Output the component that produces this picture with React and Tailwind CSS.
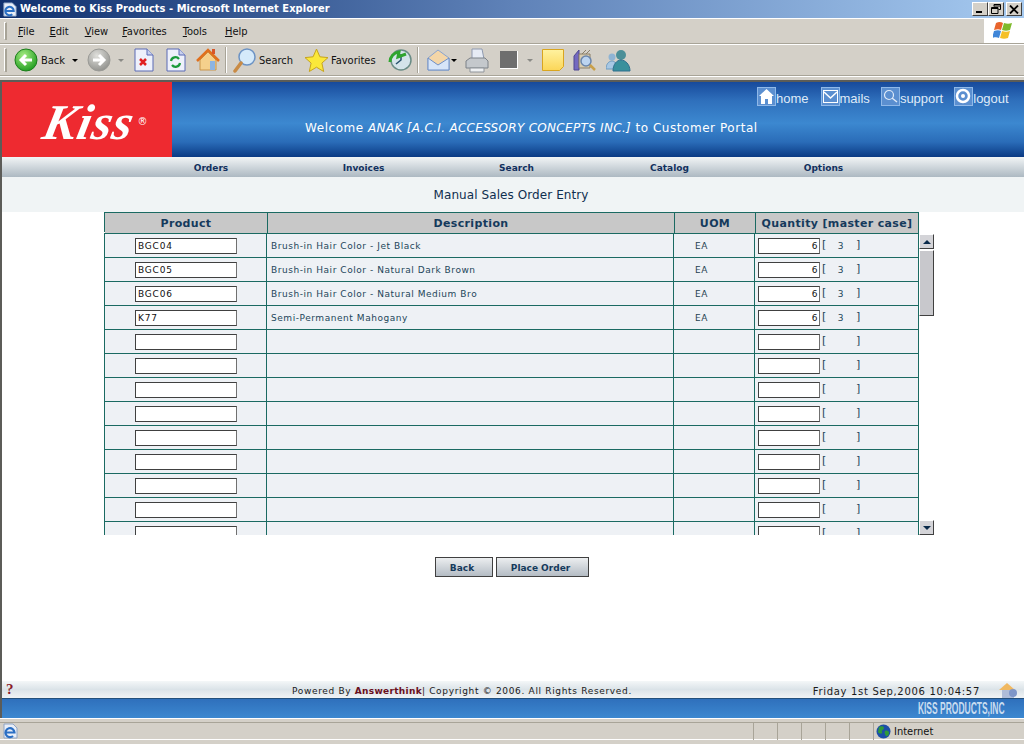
const rows = [
  ["BGC04", "Brush-in Hair Color - Jet Black", "EA", "6", "3"],
  ["BGC05", "Brush-in Hair Color - Natural Dark Brown", "EA", "6", "3"],
  ["BGC06", "Brush-in Hair Color - Natural Medium Bro", "EA", "6", "3"],
  ["K77", "Semi-Permanent Mahogany", "EA", "6", "3"],
  ...Array.from({ length: 9 }, () => ["", "", "", "", ""]),
];

const Arrow = ({ cls = "border-t-black" }) => (
  <span className={`block w-0 h-0 border-x-[3px] border-x-transparent border-t-[3px] ${cls}`} />
);

const RoundBtn = ({ grey, flip }) => (
  <svg width="24" height="24" viewBox="0 0 24 24">
    <defs>
      <radialGradient id={grey ? "gg" : "gb"} cx="40%" cy="30%" r="75%">
        <stop offset="0" stopColor={grey ? "#e0e0dc" : "#a6ec82"} />
        <stop offset="1" stopColor={grey ? "#8f8f8b" : "#1c9a1c"} />
      </radialGradient>
    </defs>
    <circle cx="12" cy="12" r="11" fill={`url(#${grey ? "gg" : "gb"})`} stroke={grey ? "#9a9a96" : "#1b7d1b"} />
    <path d={flip ? "M6 12h10M12 7l5 5-5 5" : "M18 12H8M12 7l-5 5 5 5"} stroke="#fff" strokeWidth="3" fill="none" />
  </svg>
);

const Doc = ({ children }) => (
  <svg width="20" height="24" viewBox="0 0 20 24">
    <path d="M1 1h12l6 6v16H1z" fill="#eef1fb" stroke="#5b6bb5" />
    <path d="M13 1v6h6" fill="#c8d0ee" stroke="#5b6bb5" />
    {children}
  </svg>
);

const Home = () => (
  <svg width="24" height="24" viewBox="0 0 24 24">
    <path d="M4 12v10h16V12L12 4z" fill="#f5d08c" stroke="#c8944a" />
    <path d="M1 13L12 2l11 11" fill="none" stroke="#e0701e" strokeWidth="2.5" />
    <rect x="14" y="13" width="5" height="9" fill="#8db4e2" />
    <rect x="16" y="1" width="3" height="5" fill="#d8562a" />
  </svg>
);

const Search = () => (
  <svg width="25" height="25" viewBox="0 0 25 25">
    <circle cx="15" cy="9" r="8" fill="#d5eafa" stroke="#6c93c4" strokeWidth="1.5" />
    <path d="M3 23l6-8" stroke="#c98b45" strokeWidth="3.5" strokeLinecap="round" />
  </svg>
);

const Star = () => (
  <svg width="25" height="25" viewBox="0 0 25 25">
    <path d="M12.5 1l3.4 7.8 8.1.8-6.1 5.5 1.8 8.4-7.2-4.3-7.2 4.3 1.8-8.4L1 9.6l8.1-.8z" fill="#fbe83a" stroke="#c7a51e" />
  </svg>
);

const History = () => (
  <svg width="24" height="24" viewBox="0 0 24 24">
    <circle cx="13" cy="12" r="10" fill="#d4e4ea" stroke="#6a8c86" strokeWidth="1.5" />
    <path d="M13 6v6l-5 4" stroke="#26506c" strokeWidth="1.5" fill="none" />
    <path d="M2 14a10 10 0 0 1 9-10l-1 5 8-3" stroke="#2fa52f" strokeWidth="3" fill="none" />
  </svg>
);

const Mail = () => (
  <svg width="23" height="24" viewBox="0 0 23 24">
    <path d="M1 10l10-8 11 8v12H1z" fill="#f4d6a8" stroke="#8aa4cf" />
    <path d="M1 22V10l10 7 11-7v12z" fill="#d7e5f8" stroke="#6f8fc6" />
  </svg>
);

const Printer = () => (
  <svg width="25" height="25" viewBox="0 0 25 25">
    <path d="M8 1h10l2 10H8z" fill="#e6ebf4" stroke="#8f9ab0" />
    <path d="M2 13l4-3h15l3 3v7H2z" fill="#c4c8cc" stroke="#7d8288" />
    <path d="M6 20h14v4H6z" fill="#eef0f2" stroke="#8f949a" />
  </svg>
);

const Note = () => (
  <svg width="22" height="22" viewBox="0 0 22 22">
    <defs>
      <linearGradient id="nt" x1="0" y1="0" x2="0" y2="1">
        <stop offset="0" stopColor="#fff2a0" />
        <stop offset="1" stopColor="#fbd658" />
      </linearGradient>
    </defs>
    <path d="M.5.5h21v17l-4 4H.5z" fill="url(#nt)" stroke="#d9a520" />
  </svg>
);

const Research = () => (
  <svg width="23" height="23" viewBox="0 0 23 23">
    <path d="M1 7l5-6v20H1z" fill="#7368c0" stroke="#4e4790" />
    <path d="M6 5h11v14H6z" fill="#d8ccb0" stroke="#8a7f68" />
    <path d="M9 5l4-4M13 5l4-4" stroke="#8a7f68" />
    <circle cx="13" cy="12" r="5" fill="#bcd4f0" stroke="#6b86ac" strokeWidth="1.5" />
    <path d="M17 16l5 5" stroke="#c9a04a" strokeWidth="2.5" />
  </svg>
);

const Messenger = () => (
  <svg width="25" height="23" viewBox="0 0 25 23">
    <circle cx="6" cy="8" r="3.5" fill="#8fb4d4" />
    <path d="M0 20c0-5 3-8 6-8s5 3 5 8z" fill="#a8c8e4" stroke="#6f9cc0" />
    <circle cx="15" cy="6" r="5" fill="#4b8f98" />
    <path d="M7 22c0-7 4-11 8-11s9 4 9 11z" fill="#39909c" stroke="#2f6f8e" />
  </svg>
);

const WinFlag = () => (
  <svg width="22" height="20" viewBox="0 0 22 20">
    <path d="M3 2c3-1.500 5-1 7 0l-2 7c-2-1-4-1-7 0z" fill="#e8642c" />
    <path d="M11 2c3 1 5 1 8 0l-2 7c-3 1-5 1-8 0z" fill="#7fba2c" />
    <path d="M1 10c3-1 5-1 7 0l-2 7c-2-1-4-1-7 0z" fill="#3f86d8" />
    <path d="M9 10c3 1 5 1 8 0l-2 7c-3 1-5 1-8 0z" fill="#f5c027" />
  </svg>
);

const Ie = ({ size = 16 }) => (
  <svg width={size} height={size} viewBox="0 0 16 16">
    <path d="M2 1h9l4 4v10H2z" fill="#e8eef8" stroke="#8ea4c4" />
    <path d="M3.500 9.500h9a4.500 4.500 0 1 0-1.500 3.500" fill="none" stroke="#2a6fc4" strokeWidth="2.200" />
  </svg>
);

const Globe = () => (
  <svg width="15" height="15" viewBox="0 0 15 15">
    <circle cx="7.500" cy="7.500" r="7" fill="#1c4fa8" />
    <path d="M3 3c2-1 5-1 5 1s-3 2-2 4-3 2-4 0zM9 7c2-1 4 0 4 2s-2 4-3 3-2-4-1-5z" fill="#2f9a3a" />
  </svg>
);

const Tool = ({ children, ml, w }) => (
  <div className={`flex items-center justify-center shrink-0 ${ml} ${w}`}>{children}</div>
);

const Grip = () => <div className="w-[3px] h-full border-l border-t border-white border-r-2 border-r-[#a8a498] border-b border-b-[#a8a498]" />;

const Sep = ({ ml }) => <div className={`w-[2px] h-[26px] border-l border-[#a8a498] bg-white shrink-0 ${ml}`} />;

const MenuItem = ({ u, rest, ml }) => (
  <span className={ml}>
    <span className="underline">{u}</span>
    {rest}
  </span>
);

const WinBtn = ({ children }) => (
  <div className="w-[16px] h-[14px] bg-[#d4d0c8] border border-t-white border-l-white border-r-[#404040] border-b-[#404040] flex items-center justify-center text-black">
    {children}
  </div>
);

const TopLink = ({ icon, label, ml }) => (
  <div className={`flex items-end shrink-0 ${ml}`}>
    <div className="w-[19px] h-[19px] bg-[#5b8fd0] border border-[#8fb8e8] flex items-center justify-center">{icon}</div>
    <span className="font-['Liberation_Sans',sans-serif] text-[13px] leading-[15px] text-[#dfeaf8]">{label}</span>
  </div>
);

const NavItem = ({ children, w }) => <div className={`${w} text-center`}>{children}</div>;

const cellLine = "border-b border-[#1a6a62]";

const Row = ({ r }) => (
  <div className={`grid grid-cols-[162px_407px_81px_164px] h-[24px] shrink-0 bg-[#eef1f5] ${cellLine} text-[9px] tracking-[0.55px] text-[#23465a]`}>
    <div className="flex items-center pl-[30px] border-r border-[#1a6a62]">
      <div className="w-[102px] h-[16px] bg-white border border-t-[#404040] border-l-[#404040] border-r-[#707070] border-b-[#404040] pl-[2px] pt-[2px] flex items-center text-[#111] tracking-[0.8px]">{r[0]}</div>
    </div>
    <div className="flex items-center pl-[4px] pt-[3px] border-r border-[#1a6a62]">{r[1]}</div>
    <div className="flex items-center pl-[21px] pt-[3px] border-r border-[#1a6a62] text-[#1f3f50]">{r[2]}</div>
    <div className="flex items-center pl-[3px]">
      <div className="w-[62px] h-[16px] bg-white border border-t-[#404040] border-l-[#404040] border-r-[#707070] border-b-[#404040] pr-[1px] pt-[2px] flex items-center justify-end text-[#111]">{r[3]}</div>
      <span className="ml-[2px] w-[6px] text-[11px]">[</span>
      <span className="w-[26px] text-center pt-[3px]">{r[4]}</span>
      <span className="ml-[2px] text-[11px]">]</span>
    </div>
  </div>
);

const HeadCell = ({ children, cls }) => (
  <div className={`flex items-center justify-center pt-[3px] bg-[#c8c8c8] border border-[#1a6a62] border-l-0 text-[11px] font-bold tracking-[0.35px] text-[#153a5c] ${cls}`}>{children}</div>
);

const ScrollBtn = ({ up }) => (
  <div className="h-[15px] bg-[#d4d4d8] border border-t-white border-l-white border-r-[#404040] border-b-[#404040] flex items-center justify-center">
    <span className={`block w-0 h-0 border-x-[4px] border-x-transparent ${up ? "border-b-[4px] border-b-[#0a2a4a]" : "border-t-[4px] border-t-[#0a2a4a]"}`} />
  </div>
);

const PageBtn = ({ children, w }) => (
  <div className={`${w} h-[20px] flex items-center justify-center pt-[3px] pr-[3px] border border-[#404040] bg-gradient-to-b from-[#eceef0] to-[#b4bcc4] text-[9px] font-bold text-[#153a5c]`}>{children}</div>
);

const StatusCell = () => <div className="w-[24px] h-[18px] border-l border-[#a8a498]" />;

export default function App() {
  return (
    <div className="w-[1024px] h-[744px] overflow-hidden flex flex-col bg-white font-['Liberation_Sans',sans-serif]">
      {/* title bar */}
      <div className="h-[18px] shrink-0 flex items-center pl-[2px] pr-[2px] bg-gradient-to-r from-[#10306e] via-[#5f82b8] to-[#a6caf0] text-white">
        <Ie size={15} />
        <span className="ml-[3px] font-['DejaVu_Sans_Condensed','DejaVu_Sans',sans-serif] text-[11px] font-bold tracking-[0.04px]">Welcome to Kiss Products - Microsoft Internet Explorer</span>
        <div className="ml-auto flex items-center">
          <WinBtn><span className="block w-[6px] h-[2px] bg-black mt-[6px] mr-[2px]" /></WinBtn>
          <WinBtn>
            <svg width="10" height="10" viewBox="0 0 10 10"><path d="M3 .5h6.500v5H7.500M3 .5v2M3 2h6.500" fill="none" stroke="#000" /><path d="M.5 3.500h6.500v6H.5zM.5 4.500h6.500" fill="none" stroke="#000" /></svg>
          </WinBtn>
          <div className="ml-[2px]">
            <WinBtn><svg width="10" height="9" viewBox="0 0 10 9"><path d="M1 .5l8 8M9 .5l-8 8" stroke="#000" strokeWidth="1.800" /></svg></WinBtn>
          </div>
        </div>
      </div>

      {/* chrome */}
      <div className="bg-[#d4d0c8] shrink-0 border-t border-white text-[#111] text-[11px] font-['DejaVu_Sans_Condensed','DejaVu_Sans',sans-serif]">
        <div className="h-[25px] flex items-stretch border-b border-[#a8a498]">
          <div className="py-[3px] pl-[4px] w-[9px]"><Grip /></div>
          <div className="flex-1 flex items-center pt-[2px]">
            <MenuItem u="F" rest="ile" ml="ml-[9px]" />
            <MenuItem u="E" rest="dit" ml="ml-[15px]" />
            <MenuItem u="V" rest="iew" ml="ml-[16px]" />
            <MenuItem u="F" rest="avorites" ml="ml-[14px]" />
            <MenuItem u="T" rest="ools" ml="ml-[16px]" />
            <MenuItem u="H" rest="elp" ml="ml-[18px]" />
          </div>
          <div className="w-[40px] bg-white flex items-center justify-center ml-[1px]"><WinFlag /></div>
        </div>
        <div className="h-[32px] flex items-center border-t border-white border-b border-b-[#a8a498]">
          <div className="py-[3px] pl-[4px] w-[9px] h-full shrink-0"><Grip /></div>
          <Tool ml="ml-[5px]" w="w-[24px]"><RoundBtn /></Tool>
          <span className="ml-[3px] w-[26px] shrink-0 pt-[2px]">Back</span>
          <div className="ml-[5px]"><Arrow /></div>
          <Tool ml="ml-[9px]" w="w-[24px]"><RoundBtn grey flip /></Tool>
          <div className="ml-[7px]"><Arrow cls="border-t-[#8a8a86]" /></div>
          <Tool ml="ml-[10px]" w="w-[20px]">
            <Doc><path d="M6 11l6 6M12 11l-6 6" stroke="#e02020" strokeWidth="2.500" /></Doc>
          </Tool>
          <Tool ml="ml-[12px]" w="w-[20px]">
            <Doc><path d="M5 13a4.500 4.500 0 0 1 8-2M14 15a4.500 4.500 0 0 1-8 2" stroke="#1a9a3a" strokeWidth="2.200" fill="none" /></Doc>
          </Tool>
          <Tool ml="ml-[10px]" w="w-[24px]"><Home /></Tool>
          <Sep ml="ml-[5px]" />
          <Tool ml="ml-[5px]" w="w-[25px]"><Search /></Tool>
          <span className="ml-[2px] w-[36px] shrink-0 pt-[2px]">Search</span>
          <Tool ml="ml-[9px]" w="w-[25px]"><Star /></Tool>
          <span className="ml-[2px] w-[48px] shrink-0 pt-[2px]">Favorites</span>
          <Tool ml="ml-[9px]" w="w-[24px]"><History /></Tool>
          <Sep ml="ml-[5px]" />
          <Tool ml="ml-[8px]" w="w-[23px]"><Mail /></Tool>
          <div className="ml-[1px]"><Arrow /></div>
          <Tool ml="ml-[7px]" w="w-[25px]"><Printer /></Tool>
          <div className="ml-[11px] w-[18px] h-[18px] shrink-0 bg-[#6e6e6e] border-r border-b border-white" />
          <div className="ml-[9px]"><Arrow cls="border-t-[#8a8a86]" /></div>
          <Tool ml="ml-[9px]" w="w-[22px]"><Note /></Tool>
          <Tool ml="ml-[9px]" w="w-[23px]"><Research /></Tool>
          <Tool ml="ml-[10px]" w="w-[25px]"><Messenger /></Tool>
        </div>
        <div className="h-[4px] border-t border-white" />
      </div>

      {/* page */}
      <div className="flex-1 min-h-0 flex flex-col border-l-2 border-t-2 border-[#5c5c58] bg-white text-[#0f3050] font-['DejaVu_Sans',sans-serif]">
        <div className="h-[75px] shrink-0 flex">
          <div className="w-[170px] shrink-0 bg-[#ee2a30] flex items-center justify-center pl-[18px] pt-[4px] text-white">
            <span className="font-['Liberation_Serif',serif] italic font-bold text-[50px] leading-none tracking-[1px] -skew-x-12">Kiss</span>
            <span className="text-[10px] self-start mt-[28px] ml-[3px]">®</span>
          </div>
          <div className="flex-1 min-w-0 flex flex-col bg-[linear-gradient(180deg,#174a9c_0%,#2f70bc_25%,#3c88d0_55%,#2a6cb8_80%,#0a3a84_100%)] text-white">
            <div className="flex justify-start pl-[585px] pt-[5px] h-[24px]">
              <TopLink label="home" icon={<svg width="17" height="17" viewBox="0 0 17 17"><path d="M8.500 1L1 8h2v8h4v-5h3v5h4V8h2z" fill="#fff" /></svg>} />
              <TopLink ml="ml-[12px]" label="mails" icon={<svg width="15" height="13" viewBox="0 0 15 13"><rect x=".5" y=".5" width="14" height="12" fill="none" stroke="#fff" /><path d="M1 2l6.500 6L14 2" fill="none" stroke="#fff" strokeWidth="1.500" /></svg>} />
              <TopLink ml="ml-[11px]" label="support" icon={<svg width="15" height="15" viewBox="0 0 15 15"><circle cx="6" cy="6" r="4.500" fill="none" stroke="#dfeaf8" strokeWidth="1.200" /><path d="M9 9l5 4" stroke="#dfeaf8" strokeWidth="1.500" /></svg>} />
              <TopLink ml="ml-[11px]" label="logout" icon={<svg width="17" height="17" viewBox="0 0 17 17"><circle cx="8" cy="8" r="6" fill="none" stroke="#fff" strokeWidth="2.500" /><circle cx="8" cy="8" r="2" fill="#fff" /></svg>} />
            </div>
            <div className="pl-[133px] text-[12px] leading-[16px] mt-[14px] tracking-[0.55px] font-medium whitespace-nowrap">
              Welcome <em className="tracking-[0.3px] font-normal">ANAK [A.C.I. ACCESSORY CONCEPTS INC.]</em> to Customer Portal
            </div>
          </div>
        </div>

        <div className="h-[20px] shrink-0 flex items-center pt-[4px] bg-gradient-to-b from-[#f2f5f6] to-[#adb9c2] text-[9px] font-bold text-[#12305e] pl-[133px]">
          <NavItem w="w-[152px]">Orders</NavItem>
          <NavItem w="w-[153px]">Invoices</NavItem>
          <NavItem w="w-[153px]">Search</NavItem>
          <NavItem w="w-[153px]">Catalog</NavItem>
          <NavItem w="w-[155px]">Options</NavItem>
        </div>

        <div className="h-[35px] shrink-0 bg-[#f0f4f5] flex items-center justify-center pr-[4px] text-[12px] tracking-[0.08px] text-[#0f2f4f] font-medium">Manual Sales Order Entry</div>

        {/* table */}
        <div className="pl-[102px] flex flex-col shrink-0">
          <div className="grid grid-cols-[163px_407px_81px_163px] w-[815px] h-[20px] border-l border-[#1a6a62]">
            <HeadCell>Product</HeadCell>
            <HeadCell>Description</HeadCell>
            <HeadCell>UOM</HeadCell>
            <HeadCell>Quantity [master case]</HeadCell>
          </div>
          <div className="flex mt-[1px] h-[302px]">
            <div className="w-[815px] h-full overflow-hidden flex flex-col border-l border-t border-r border-[#1a6a62]">
              {rows.map((r, i) => <Row key={i} r={r} />)}
            </div>
            <div className="w-[15px] flex flex-col h-full pt-[1px]">
              <ScrollBtn up />
              <div className="mt-[1px] h-[66px] bg-[#c8c8cc] border border-t-white border-l-white border-r-[#404040] border-b-[#404040]" />
              <div className="flex-1 bg-white" />
              <ScrollBtn />
            </div>
          </div>
        </div>

        <div className="flex justify-center gap-[3px] mt-[22px] pr-[3px] shrink-0">
          <PageBtn w="w-[58px]">Back</PageBtn>
          <PageBtn w="w-[93px]">Place Order</PageBtn>
        </div>

        <div className="flex-1" />

        {/* footer */}
        <div className="h-[18px] shrink-0 flex items-center bg-gradient-to-b from-[#f4f7f8] via-[#dbe3e8] to-[#f0f3f5] border-b border-[#23507c] text-[9px] tracking-[0.67px] text-[#1a1a1a] pl-[4px]">
          <span className="font-['Liberation_Serif',serif] text-[15px] font-bold text-[#8a1a28] w-[10px]">?</span>
          <span className="ml-[276px] pt-[4px] whitespace-nowrap">Powered By <b className="text-[#6a0f1c] tracking-[0.3px]">Answerthink</b>| Copyright © 2006. All Rights Reserved.</span>
          <span className="ml-auto pt-[4px] whitespace-nowrap mr-[18px] text-[10px] tracking-[0.7px]">Friday 1st Sep,2006 10:04:57</span>
          <svg className="mr-[6px]" width="20" height="16" viewBox="0 0 20 16"><path d="M1 8l8-7 8 7z" fill="#f0b860" /><rect x="4" y="8" width="12" height="8" fill="#aebcd8" /><circle cx="15" cy="11" r="4" fill="#7e96c8" /></svg>
        </div>
        <div className="h-[19px] shrink-0 flex items-center justify-end bg-gradient-to-b from-[#2f70bc] to-[#3c88d0] pr-[19px]">
          <span className="font-['Liberation_Sans',sans-serif] text-[16px] font-bold text-[#c8dcf0] scale-x-[0.53] origin-right whitespace-nowrap">KISS PRODUCTS,INC</span>
        </div>
      </div>

      {/* status */}
      <div className="h-[26px] shrink-0 bg-[#d4d0c8] border-t border-t-white text-[11px] text-[#111] font-['DejaVu_Sans_Condensed','DejaVu_Sans',sans-serif]">
        <div className="h-[3px]" />
        <div className="h-[18px] flex items-center border-t border-[#a8a498] border-b border-b-white">
          <div className="pl-[2px] w-[753px] shrink-0"><Ie /></div>
          <StatusCell /><StatusCell /><StatusCell /><StatusCell /><StatusCell />
          <div className="flex items-center border-l border-[#a8a498] h-[18px] pl-[2px] gap-[3px]">
            <Globe /><span className="pt-[2px]">Internet</span>
          </div>
        </div>
      </div>
    </div>
  );
}
